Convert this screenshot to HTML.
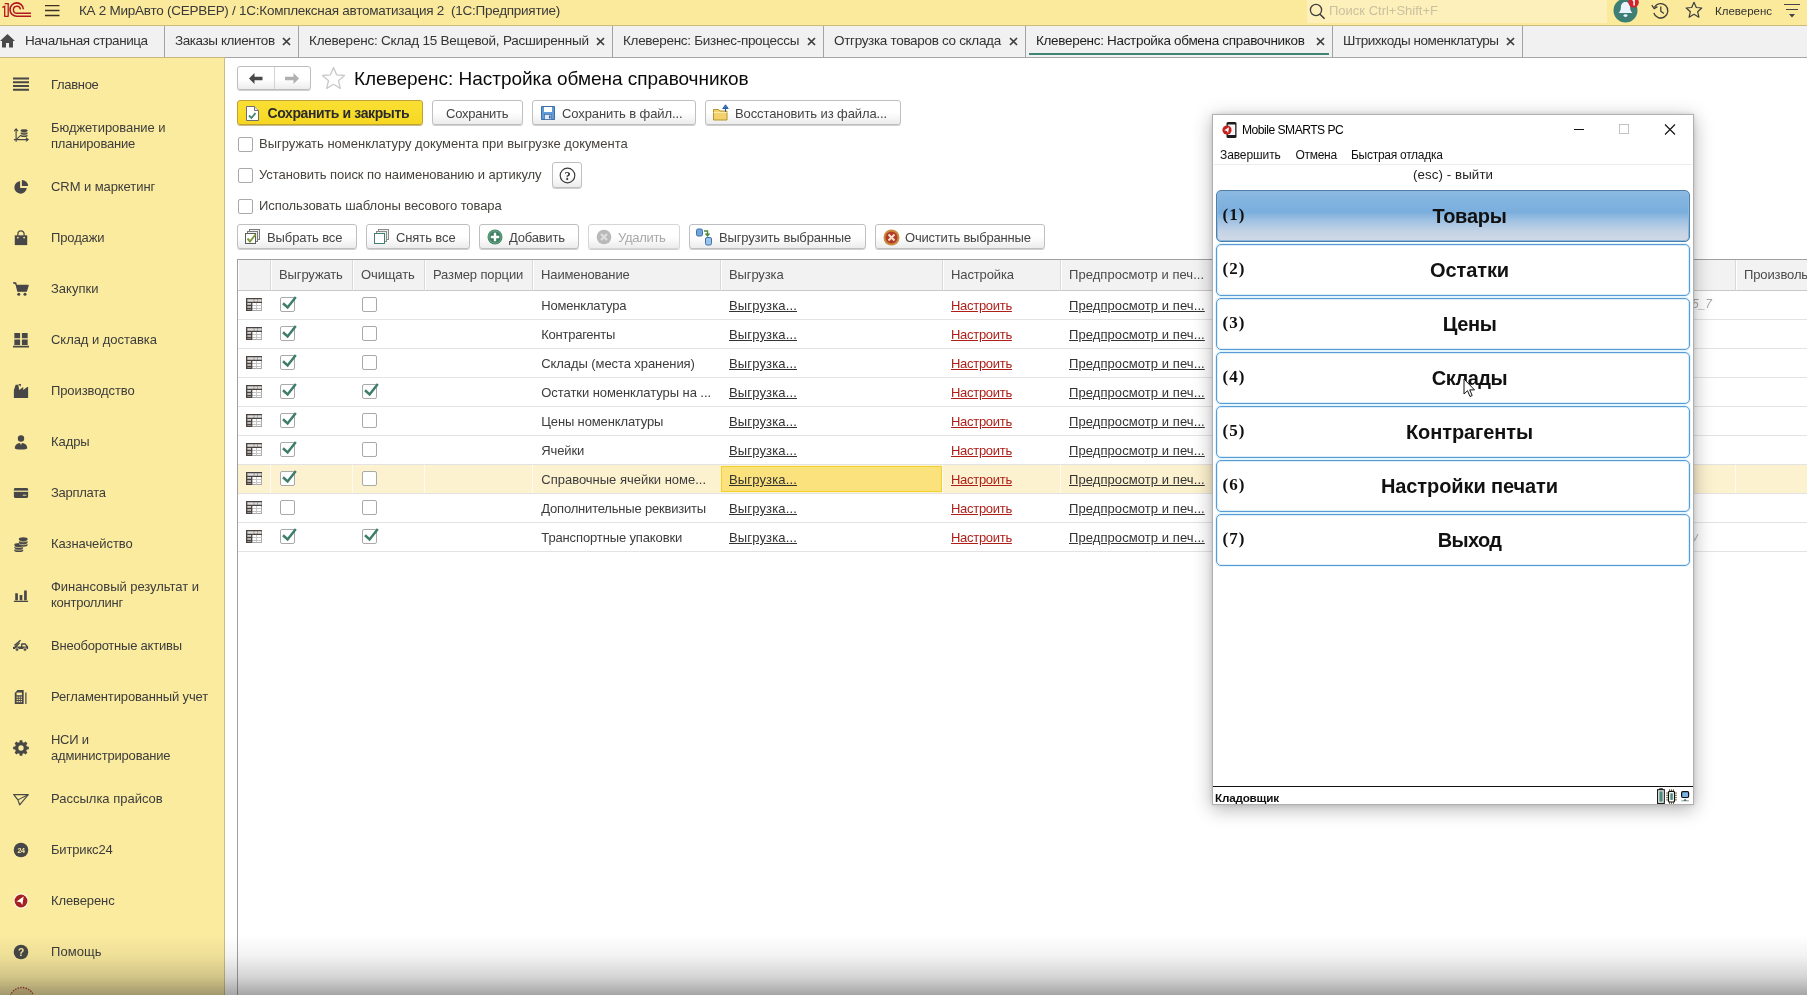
<!DOCTYPE html>
<html lang="ru">
<head>
<meta charset="utf-8">
<title>1C</title>
<style>
*{box-sizing:border-box;margin:0;padding:0}
html,body{width:1807px;height:995px;overflow:hidden;background:#fff}
body{font-family:"Liberation Sans",sans-serif;font-size:13px;color:#333;position:relative}
.abs{position:absolute}
/* title bar */
#titlebar{position:absolute;left:0;top:0;width:1807px;height:26px;background:#fbe99c;border-bottom:1px solid #cdbb7c}
#titlebar .ttl{position:absolute;left:79px;top:2.500px;font-size:13.500px;line-height:16px;letter-spacing:-0.262px;color:#3a3a3a;white-space:pre}
#search{position:absolute;left:1307px;top:0;width:300px;height:23px;background:#fdf0bb}
#search span{position:absolute;left:22px;top:3px;font-size:13px;line-height:15px;color:#c9c2a0}
/* tabs */
#tabs{position:absolute;left:0;top:26px;width:1807px;height:32px;background:#f1f1f1;border-bottom:1px solid #a6a6a6}
.tab{position:absolute;top:0;height:31px;border-right:1px solid #a3a3a3;font-size:13.500px;line-height:29px;color:#333;white-space:nowrap;letter-spacing:-.1px}
.tab .t{position:absolute;top:0;left:0}
.tab .x{position:absolute;top:11px;width:9px;height:9px}
/* sidebar */
#side{position:absolute;left:0;top:58px;width:225px;height:937px;background:#fbeb9f;border-right:1px solid #cdbd7e}
.si{position:absolute;left:0;width:224px;height:51px;margin-top:1px}
.si .ic{position:absolute;left:13px;top:17.500px;width:16px;height:16px}
.si .tx{position:absolute;left:51px;top:0;height:51px;display:flex;align-items:center;font-size:13px;line-height:16px;color:#3c3c3c;letter-spacing:-.15px}
/* content */
#content{position:absolute;left:226px;top:58px;width:1581px;height:937px;background:#fff}

.navbox{position:absolute;width:74px;height:24px;border:1px solid #bdbdbd;border-radius:3px;background:linear-gradient(#fff,#fff 55%,#ececec);box-shadow:0 1px 0 #cfcfcf}
.btn{position:absolute;height:25px;border:1px solid #bfbfbf;border-radius:3px;background:linear-gradient(#fff,#fff 50%,#ececec);box-shadow:0 1px 0 #d0d0d0}
.btn span{position:absolute;top:0;line-height:25px;font-size:13px;color:#444;white-space:nowrap;letter-spacing:-.1px}
.btn.def{background:linear-gradient(#f9df33,#f8dc2a 60%,#f6d622);border-color:#bfa232;box-shadow:0 1px 0 #c9bd84}
.btn.dis{border-color:#d6d6d6}
.cb{position:absolute;width:15px;height:15px;border:1px solid #a9a9a9;border-radius:2px;background:#fff}
.lbl{position:absolute;font-size:13px;line-height:15px;color:#46423e;white-space:nowrap;letter-spacing:-.12px}
#tbl{position:absolute;left:11px;top:201px;width:1570px;height:736px;border-left:1px solid #a0a0a0;border-top:1px solid #a0a0a0}
.th{position:absolute;top:0;height:31px;background:#f2f2f2;border-right:1px solid #d9d9d9;border-bottom:1px solid #c9c9c9;box-shadow:inset 1px 0 0 #fff}
.th span{position:absolute;left:8px;top:0;line-height:29px;font-size:13px;color:#4a4a4a;white-space:nowrap;letter-spacing:-.12px}
.tr{position:absolute;left:0;width:1569px;height:29px;border-bottom:1px solid #e3e3e3}
.tr.sel{background:#fdf2d0}
.td{position:absolute;top:0;line-height:29px;font-size:13px;color:#3c3c3c;white-space:nowrap;letter-spacing:-.12px}
.lk{text-decoration:underline;color:#333}
.lk.red{color:#ad1f18}
.ti{position:absolute;left:8px;top:7px;width:16px;height:13px}
.tk{position:absolute;left:-1px;top:-5px;width:18px;height:17px}
.selcell{position:absolute;left:483px;top:1px;width:221px;height:26px;background:#fbe27c;border:1px solid #f3d02a}

#ms{position:absolute;left:1212px;top:114px;width:482px;height:691px;background:#fff;border:1px solid #b0b0b0;box-shadow:0 4px 18px rgba(0,0,0,.30),0 0 5px rgba(0,0,0,.12)}
.mm{position:absolute;top:32px;font-size:12px;line-height:14px;color:#111;white-space:nowrap;letter-spacing:-.1px}
.mb{position:absolute;left:2px;width:474px;height:52px;border:1px solid #5b9bd5;border-radius:5px;background:#fff;box-shadow:inset 0 0 0 1px #dcedfa,0 0 0 1px #e4f5fc}
.mb.act{background:linear-gradient(#8cbae3 0,#84b5e0 15%,#7aaedd 42%,#9dc0e2 58%,#c2d2e5 80%,#d2dae6 100%);border-color:#4f7fa8;box-shadow:inset 0 0 0 1px #8bb9e2}
.mb i{position:absolute;left:5.500px;top:0;line-height:48px;font-family:"Liberation Serif",serif;font-style:normal;font-weight:bold;font-size:17px;color:#111;letter-spacing:1.1px}
.mb b{position:absolute;left:33px;right:0;top:0;line-height:50px;text-align:center;font-size:20px;font-weight:bold;color:#111;letter-spacing:-.1px}
#content,#side,#tabs,#titlebar,#ms{will-change:transform}
</style>
</head>
<body>
<!-- TITLE BAR -->
<div id="titlebar">
  <svg class="abs" style="left:0;top:0" width="34" height="20" viewBox="0 0 34 20"><g fill="none" stroke="#b3161e" stroke-width="1.300"><path d="M2.300 7.300L4.700 6.300V16.800M4.700 3.600H8.200M8.200 3V16.800M4.700 16.400h3.500"/><path d="M23.400 9.200A6.700 6.700 0 1 0 16.800 16.300H31" stroke-width="1.600"/><path d="M20.400 9.300A3.500 3.500 0 1 0 17 13.300H31" stroke-width="1.400"/></g></svg>
  <svg class="abs" style="left:45px;top:5px" width="15" height="12" viewBox="0 0 15 12"><path d="M0 .5H14.500M0 5.500H14.500M0 10.500H14.500" stroke="#3d3122" stroke-width="1.400"/></svg>
  <div class="ttl">КА 2 МирАвто (СЕРВЕР) / 1С:Комплексная автоматизация 2  (1С:Предприятие)</div>
  <div id="search">
    <svg class="abs" style="left:2px;top:3px" width="17" height="17" viewBox="0 0 17 17"><circle cx="7" cy="7" r="5.6" fill="none" stroke="#3d3d3d" stroke-width="1.3"/><path d="M11 11.2L15.6 15.8" stroke="#3d3d3d" stroke-width="1.6"/></svg>
    <span>Поиск Ctrl+Shift+F</span>
  </div>
  <!-- bell -->
  <svg class="abs" style="left:1613px;top:-2px" width="28" height="26" viewBox="0 0 28 26"><circle cx="12.5" cy="12.5" r="12" fill="#3d7f74"/><path d="M12.5 4c-3.2 0-4.6 2.6-4.6 5.4 0 3-1.4 4.6-2.4 5.6h14c-1-1-2.4-2.6-2.4-5.600 0-2.800-1.400-5.400-4.600-5.400z" fill="#e9f4ff"/><ellipse cx="12.5" cy="17.6" rx="2" ry="1.4" fill="#e9f4ff"/><circle cx="20.600" cy="4.200" r="5.200" fill="#d3222a"/><path d="M19.600 2.600l1.500-1v5.800" stroke="#fff" stroke-width="1.500" fill="none"/></svg>
  <!-- history -->
  <svg class="abs" style="left:1651px;top:2px" width="19" height="18" viewBox="0 0 19 18"><path d="M3.4 5.2A7.200 7.200 0 1 1 2.800 11" fill="none" stroke="#3d3d3d" stroke-width="1.300"/><path d="M.8 3.200l2.400 3.400 3.200-2" fill="none" stroke="#3d3d3d" stroke-width="1.300"/><path d="M9.800 4.500v4.700l3 2.300" fill="none" stroke="#3d3d3d" stroke-width="1.300"/></svg>
  <!-- star -->
  <svg class="abs" style="left:1685px;top:1px" width="18" height="18" viewBox="0 0 18 18"><path d="M9 1.300l2.300 5.200 5.500.5-4.200 3.700 1.300 5.500L9 13.300l-4.900 2.900 1.300-5.500L1.200 7l5.500-.5z" fill="none" stroke="#3d3d3d" stroke-width="1.200" stroke-linejoin="round"/></svg>
  <div class="abs" style="left:1715px;top:4px;font-size:11.500px;line-height:14px;color:#333">Клеверенс</div>
  <svg class="abs" style="left:1784px;top:4px" width="16" height="15" viewBox="0 0 16 15"><path d="M0 .5H16M2 5.500H14" stroke="#444" stroke-width="1"/><path d="M5 10h6l-3 3.500z" fill="#444"/></svg>
</div>

<!-- TABS -->
<div id="tabs">
  <div class="tab" style="left:0;width:165px"><svg class="abs" style="left:0;top:8px" width="15" height="14" viewBox="0 0 15 14"><path d="M7.500 0L0 7h2v6.500h4V9h3v4.500h4V7h2z" fill="#4a4a4a"/></svg><span class="t" style="left:25px;letter-spacing:-0.445px">Начальная страница</span></div>
  <div class="tab" style="left:165px;width:134px"><span class="t" style="left:10px;letter-spacing:-0.421px">Заказы клиентов</span><svg class="x" style="left:117px" viewBox="0 0 9 9"><path d="M1 1l7 7M8 1L1 8" stroke="#3d3d3d" stroke-width="1.700"/></svg></div>
  <div class="tab" style="left:299px;width:314px"><span class="t" style="left:10px;letter-spacing:-0.232px">Клеверенс: Склад 15 Вещевой, Расширенный</span><svg class="x" style="left:297px" viewBox="0 0 9 9"><path d="M1 1l7 7M8 1L1 8" stroke="#3d3d3d" stroke-width="1.700"/></svg></div>
  <div class="tab" style="left:613px;width:211px"><span class="t" style="left:10px;letter-spacing:-0.300px">Клеверенс: Бизнес-процессы</span><svg class="x" style="left:194px" viewBox="0 0 9 9"><path d="M1 1l7 7M8 1L1 8" stroke="#3d3d3d" stroke-width="1.700"/></svg></div>
  <div class="tab" style="left:824px;width:202px"><span class="t" style="left:10px;letter-spacing:-0.319px">Отгрузка товаров со склада</span><svg class="x" style="left:185px" viewBox="0 0 9 9"><path d="M1 1l7 7M8 1L1 8" stroke="#3d3d3d" stroke-width="1.700"/></svg></div>
  <div class="tab" style="left:1026px;width:307px;color:#1f1f1f"><span class="t" style="left:10px;letter-spacing:-0.315px">Клеверенс: Настройка обмена справочников</span><svg class="x" style="left:290px" viewBox="0 0 9 9"><path d="M1 1l7 7M8 1L1 8" stroke="#3d3d3d" stroke-width="1.700"/></svg><div class="abs" style="left:3px;top:27px;width:300px;height:2px;background:#3f8575"></div></div>
  <div class="tab" style="left:1333px;width:190px"><span class="t" style="left:10px;letter-spacing:-0.447px">Штрихкоды номенклатуры</span><svg class="x" style="left:173px" viewBox="0 0 9 9"><path d="M1 1l7 7M8 1L1 8" stroke="#3d3d3d" stroke-width="1.700"/></svg></div>
</div>

<div class="abs" style="left:0;top:57px;width:225px;height:1px;background:#c9b77d;z-index:2"></div>
<!-- SIDEBAR -->
<div id="side">
<div class="si" style="top:0"><svg class="ic" viewBox="0 0 18 18"><path d="M0 1.800h18M0 6h18M0 10.200h18M0 14.400h18" stroke="#474747" stroke-width="2.300"/></svg><div class="tx"><div><span style="letter-spacing:-0.307px">Главное</span></div></div></div>
<div class="si" style="top:51px"><svg class="ic" viewBox="0 0 18 18"><g stroke="#474747" fill="none" stroke-width="1.300"><path d="M3.500 1v14.500M1 13H17"/><path d="M1.500 3.500l2-2.500 2 2.500M14.500 11l2.500 2-2.500 2"/><path d="M3.500 13L9 8"/></g><g fill="#474747"><ellipse cx="12.500" cy="3" rx="4" ry="1.600"/><ellipse cx="12.500" cy="5.800" rx="4" ry="1.600"/><ellipse cx="12.500" cy="8.600" rx="4" ry="1.600"/></g><g stroke="#fbeb9f" stroke-width=".7" fill="none"><path d="M8.500 4.300c1 1.500 7 1.500 8 0M8.500 7.100c1 1.500 7 1.500 8 0"/></g></svg><div class="tx"><div><span style="letter-spacing:-0.050px">Бюджетирование и</span><br><span style="letter-spacing:-0.192px">планирование</span></div></div></div>
<div class="si" style="top:102px"><svg class="ic" viewBox="0 0 18 18"><path d="M8 2.500A7 7 0 1 0 15.500 10H8z" fill="#474747"/><path d="M10 1v7h7A7 7 0 0 0 10 1z" fill="#474747"/></svg><div class="tx"><div><span style="letter-spacing:-0.070px">CRM и маркетинг</span></div></div></div>
<div class="si" style="top:153px"><svg class="ic" viewBox="0 0 18 18"><path d="M2 6h14v11H2z" fill="#474747"/><path d="M5.500 8V4.500a3.500 3.500 0 0 1 7 0V8" fill="none" stroke="#474747" stroke-width="1.400"/><circle cx="5.500" cy="8.500" r="1" fill="#fbeb9f"/><circle cx="12.500" cy="8.500" r="1" fill="#fbeb9f"/></svg><div class="tx"><div><span style="letter-spacing:-0.121px">Продажи</span></div></div></div>
<div class="si" style="top:204px"><svg class="ic" viewBox="0 0 18 18"><path d="M0 2h3l2.500 9.500h9.500l2-6.500H4.500" fill="#474747" stroke="#474747" stroke-width="1.400" stroke-linejoin="round"/><circle cx="6.500" cy="15" r="1.700" fill="#474747"/><circle cx="13.500" cy="15" r="1.700" fill="#474747"/></svg><div class="tx"><div><span style="letter-spacing:0.007px">Закупки</span></div></div></div>
<div class="si" style="top:255px"><svg class="ic" viewBox="0 0 18 18"><path d="M1.500 1h6.500v6H1.500zM10 1h6.500v6H10zM1.500 8.500h6.500v6H1.500zM10 8.500h6.500v6H10zM0 15.500h18v2H0z" fill="#474747"/></svg><div class="tx"><div><span style="letter-spacing:-0.044px">Склад и доставка</span></div></div></div>
<div class="si" style="top:306px"><svg class="ic" viewBox="0 0 18 18"><path d="M1 17V8l2-6h3l1 6 4.500-3.500V8L16 4.500h1V17z" fill="#474747"/><path d="M6 1l3 .2-.5 3z" fill="#474747"/></svg><div class="tx"><div><span style="letter-spacing:-0.100px">Производство</span></div></div></div>
<div class="si" style="top:357px"><svg class="ic" viewBox="0 0 18 18"><circle cx="9" cy="5" r="3.600" fill="#474747"/><path d="M2 16c0-4 3-6 7-6s7 2 7 6c0 1-3 1.500-7 1.500S2 17 2 16z" fill="#474747"/><path d="M7.500 9.500h3l-1.500 3z" fill="#fbeb9f"/></svg><div class="tx"><div><span style="letter-spacing:-0.070px">Кадры</span></div></div></div>
<div class="si" style="top:408px"><svg class="ic" viewBox="0 0 18 18"><rect x="1" y="3.500" width="16" height="11" rx="1.500" fill="#474747"/><path d="M1 7h16" stroke="#fbeb9f" stroke-width="1.400"/><path d="M11 11.500h4" stroke="#fbeb9f" stroke-width="1"/></svg><div class="tx"><div><span style="letter-spacing:-0.263px">Зарплата</span></div></div></div>
<div class="si" style="top:459px"><svg class="ic" viewBox="0 0 18 18"><g fill="#474747"><ellipse cx="11.500" cy="3.500" rx="5" ry="2.200"/><ellipse cx="11.500" cy="6.700" rx="5" ry="2.200"/><ellipse cx="11.500" cy="9.900" rx="5" ry="2.200"/><ellipse cx="6.500" cy="10" rx="5" ry="2.200"/><ellipse cx="6.500" cy="13" rx="5" ry="2.200"/><ellipse cx="6.500" cy="16" rx="5" ry="2.200"/></g><g stroke="#fbeb9f" stroke-width=".8" fill="none"><path d="M6.500 5.200c1 1.800 9 1.800 10 0M6.500 8.400c1 1.800 9 1.800 10 0M1.500 11.600c1 1.800 9 1.800 10 0M1.500 14.600c1 1.800 9 1.800 10 0"/></g></svg><div class="tx"><div><span style="letter-spacing:-0.067px">Казначейство</span></div></div></div>
<div class="si" style="top:510px"><svg class="ic" viewBox="0 0 18 18"><path d="M2.500 7h3v8h-3zM7.500 9h3v6h-3zM12.500 4h3v11h-3zM1 15.500h16v1.500H1z" fill="#474747"/></svg><div class="tx"><div><span style="letter-spacing:-0.045px">Финансовый результат и</span><br><span style="letter-spacing:-0.250px">контроллинг</span></div></div></div>
<div class="si" style="top:561px"><svg class="ic" viewBox="0 0 18 18"><path d="M0 12.500V10l2-.5L7 5l1 1-3.500 3.500H9V7.500c0-1 .5-1.500 1.500-1.500H14l3 3.500v3z" fill="#474747"/><path d="M1 8l7-6 1 1-6.500 6z" fill="#474747"/><path d="M10.500 7.500h3l1.500 2h-4.500z" fill="#fbeb9f"/><circle cx="4.500" cy="13" r="1.900" fill="#474747" stroke="#fbeb9f" stroke-width=".8"/><circle cx="13.500" cy="13" r="1.900" fill="#474747" stroke="#fbeb9f" stroke-width=".8"/></svg><div class="tx"><div><span style="letter-spacing:-0.224px">Внеоборотные активы</span></div></div></div>
<div class="si" style="top:612px"><svg class="ic" viewBox="0 0 18 18"><path d="M2 4.500L5 1h7v16H2z" fill="#474747"/><path d="M14.500 4v13" stroke="#474747" stroke-width="1.400"/><rect x="4" y="4" width="6" height="3" fill="#fbeb9f"/><g fill="#fbeb9f"><rect x="4" y="8.500" width="1.400" height="1.400"/><rect x="6.300" y="8.500" width="1.400" height="1.400"/><rect x="8.600" y="8.500" width="1.400" height="1.400"/><rect x="4" y="11" width="1.400" height="1.400"/><rect x="6.300" y="11" width="1.400" height="1.400"/><rect x="8.600" y="11" width="1.400" height="1.400"/><rect x="4" y="13.500" width="1.400" height="1.400"/><rect x="6.300" y="13.500" width="1.400" height="1.400"/><rect x="8.600" y="13.500" width="1.400" height="1.400"/></g></svg><div class="tx"><div><span style="letter-spacing:-0.137px">Регламентированный учет</span></div></div></div>
<div class="si" style="top:663px"><svg class="ic" viewBox="0 0 18 18"><path d="M7.600 0h2.800l.4 2.300 1.500.6 1.900-1.300 2 2-1.300 1.900.6 1.500 2.300.4v2.800l-2.300.4-.6 1.500 1.300 1.900-2 2-1.900-1.300-1.500.6-.4 2.300H7.600l-.4-2.300-1.500-.6-1.900 1.300-2-2 1.300-1.900-.6-1.500L.2 10.200V7.400l2.300-.4.6-1.500-1.300-1.900 2-2 1.900 1.300 1.500-.6z" fill="#474747" transform="translate(0,.2)"/><circle cx="9" cy="9" r="3" fill="#fbeb9f"/></svg><div class="tx"><div><span style="letter-spacing:-0.270px">НСИ и</span><br><span style="letter-spacing:-0.185px">администрирование</span></div></div></div>
<div class="si" style="top:714px"><svg class="ic" viewBox="0 0 18 18"><path d="M.8 4h16.400L7.500 15.500 5.500 10z" fill="none" stroke="#474747" stroke-width="1.300" stroke-linejoin="round"/><path d="M5.500 10L17 4.200" stroke="#474747" stroke-width="1.200"/></svg><div class="tx"><div><span style="letter-spacing:0.000px">Рассылка прайсов</span></div></div></div>
<div class="si" style="top:765px"><svg class="ic" viewBox="0 0 18 18"><circle cx="9" cy="9" r="8.200" fill="#474747"/><text x="9" y="12" font-family="Liberation Sans" font-weight="bold" font-size="8" text-anchor="middle" fill="#fbeb9f" letter-spacing="-.5">24</text></svg><div class="tx"><div><span style="letter-spacing:-0.161px">Битрикс24</span></div></div></div>
<div class="si" style="top:816px"><svg class="ic" viewBox="0 0 18 18"><circle cx="9" cy="9" r="8.600" fill="#fdf6e3"/><circle cx="9" cy="9" r="7.200" fill="#a5231f"/><path d="M4 9.500l8-5.500-1.500 9.500-2-3z" fill="#fff"/></svg><div class="tx"><div><span style="letter-spacing:-0.106px">Клеверенс</span></div></div></div>
<div class="si" style="top:867px"><svg class="ic" viewBox="0 0 18 18"><circle cx="9" cy="9" r="8.200" fill="#474747"/><text x="9" y="13.200" font-family="Liberation Sans" font-weight="bold" font-size="11.500" text-anchor="middle" fill="#fbeb9f">?</text></svg><div class="tx"><div><span style="letter-spacing:0.067px">Помощь</span></div></div></div>

</div>

<!-- CONTENT -->
<div id="content">
<!-- coordinates inside #content are page coords minus (226,58) -->
<div class="navbox" style="left:11px;top:8px"><svg class="abs" style="left:11px;top:6px" width="14" height="11" viewBox="0 0 14 11"><path d="M0 5.500L5.500 0v3.800H13.500v3.400H5.500V11z" fill="#484848"/></svg><div class="abs" style="left:36px;top:0;width:1px;height:22px;background:#d4d4d4"></div><svg class="abs" style="left:47px;top:6px" width="14" height="11" viewBox="0 0 14 11"><path d="M14 5.500L8.500 0v3.800H0v3.400h8.500V11z" fill="#b0b0b0"/></svg></div>
<svg class="abs" style="left:95px;top:8px" width="25" height="24" viewBox="0 0 25 24"><path d="M12.500 1.500l3.100 7.300 7.900.7-6 5.200 1.800 7.700-6.800-4.100-6.800 4.100 1.800-7.700-6-5.200 7.900-.7z" fill="#fff" stroke="#c9c9c9" stroke-width="1.300" stroke-linejoin="round"/></svg>
<div class="abs" style="left:128px;top:9px;font-size:19px;line-height:24px;color:#0a0a0a;white-space:nowrap;letter-spacing:-.03px">Клеверенс: Настройка обмена справочников</div>

<div class="btn def" style="left:11px;top:42px;width:186px"><svg class="abs" style="left:8px;top:5px" width="13" height="15" viewBox="0 0 13 15"><path d="M.500 .500h8l4 4v10h-12z" fill="#fff" stroke="#6e6e6e"/><path d="M8.500 .500v4h4" fill="#e8e8e8" stroke="#6e6e6e"/><path d="M3 9.500l2.500 2.500 4-5" fill="none" stroke="#3f8575" stroke-width="1.800"/></svg><span style="left:29.500px;font-weight:bold;font-size:14px;color:#2b2b2b;letter-spacing:-0.383px">Сохранить и закрыть</span></div>
<div class="btn" style="left:206px;top:42px;width:91px"><span style="left:13px;letter-spacing:-.25px">Сохранить</span></div>
<div class="btn" style="left:306px;top:42px;width:164px"><svg class="abs" style="left:8px;top:5px" width="14" height="14" viewBox="0 0 14 14"><path d="M.500 .500h13v13h-13z" fill="#5f9bd6" stroke="#3a6ea5"/><rect x="3" y="1" width="8" height="5" fill="#fff"/><rect x="3.500" y="8.500" width="7" height="5" fill="#dfe8f4" stroke="#2f5f9a" stroke-width=".6"/><rect x="8" y="9.500" width="1.600" height="3" fill="#2f5f9a"/></svg><span style="left:29px">Сохранить в файл...</span></div>
<div class="btn" style="left:479px;top:42px;width:196px"><svg class="abs" style="left:7px;top:3px" width="17" height="17" viewBox="0 0 17 17"><path d="M.500 5.500h5l1.500 1.500h7v9h-13.500z" fill="#f3d16c" stroke="#b8922c"/><path d="M.500 8.500h13.500" stroke="#fbe9a8"/><path d="M12.500 8V3M9.800 4.500L12.500 .8l2.700 3.700z" fill="#3f7fc4" stroke="#2a62a3" stroke-width="1"/></svg><span style="left:29px">Восстановить из файла...</span></div>

<div class="cb" style="left:12px;top:79px"></div><div class="lbl" style="left:33px;top:78px;letter-spacing:-.005px">Выгружать номенклатуру документа при выгрузке документа</div>
<div class="cb" style="left:12px;top:110px"></div><div class="lbl" style="left:33px;top:109px;letter-spacing:-.07px">Установить поиск по наименованию и артикулу</div>
<div class="btn" style="left:326px;top:104px;width:30px;height:26px"><svg class="abs" style="left:6px;top:4px" width="17" height="17" viewBox="0 0 17 17"><circle cx="8.500" cy="8.500" r="7.300" fill="none" stroke="#3c3c3c" stroke-width="1.200"/><text x="8.500" y="12.600" font-family="Liberation Serif" font-weight="bold" font-size="12.500" text-anchor="middle" fill="#333">?</text></svg></div>
<div class="cb" style="left:12px;top:141px"></div><div class="lbl" style="left:33px;top:140px;letter-spacing:-.08px">Использовать шаблоны весового товара</div>

<div class="btn" style="left:11px;top:166px;width:120px"><svg class="abs" style="left:7px;top:4px" width="16" height="16" viewBox="0 0 16 16"><rect x="4.500" y=".500" width="10" height="10" fill="#eee" stroke="#7a7a7a"/><rect x="2.500" y="2.500" width="10" height="10" fill="#eee" stroke="#7a7a7a"/><rect x=".500" y="4.500" width="10" height="10" fill="#fff" stroke="#5c5c5c"/><path d="M2.500 9.500l2.500 3 5.500-7" fill="none" stroke="#7d9a3c" stroke-width="2"/></svg><span style="left:29px">Выбрать все</span></div>
<div class="btn" style="left:140px;top:166px;width:104px"><svg class="abs" style="left:7px;top:4px" width="16" height="16" viewBox="0 0 16 16"><rect x="4.500" y=".500" width="10" height="10" fill="#eee" stroke="#8a8a8a"/><rect x="2.500" y="2.500" width="10" height="10" fill="#eee" stroke="#8a8a8a"/><rect x=".500" y="4.500" width="10" height="10" fill="#fff" stroke="#3f7f74"/></svg><span style="left:29px">Снять все</span></div>
<div class="btn" style="left:253px;top:166px;width:100px"><svg class="abs" style="left:7px;top:4px" width="16" height="16" viewBox="0 0 16 16"><circle cx="8" cy="8" r="7.500" fill="#3c7d63"/><circle cx="8" cy="8" r="6.200" fill="none" stroke="#7fc08f" stroke-width=".8"/><path d="M8 3.800v8.400M3.800 8h8.400" stroke="#fff" stroke-width="2.400"/></svg><span style="left:29px;letter-spacing:-.22px">Добавить</span></div>
<div class="btn dis" style="left:362px;top:166px;width:92px"><svg class="abs" style="left:7px;top:4px" width="16" height="16" viewBox="0 0 16 16"><circle cx="8" cy="8" r="7.300" fill="#b9b9b9"/><path d="M5 5l6 6M11 5l-6 6" stroke="#dedede" stroke-width="2.200"/></svg><span style="left:29px;color:#a8a8a8;letter-spacing:-.3px">Удалить</span></div>
<div class="btn" style="left:463px;top:166px;width:177px"><svg class="abs" style="left:6px;top:3px" width="17" height="18" viewBox="0 0 17 18"><rect x=".500" y="1" width="6" height="7" rx="1.500" fill="#6fa4dc" stroke="#3f72ad"/><rect x="9.500" y="9.500" width="6" height="7.500" rx="1.500" fill="#9cc3ea" stroke="#3f72ad"/><path d="M8 3h3.500v4M9.500 5.500l2 2.500 2-2.500" fill="none" stroke="#4d8a3c" stroke-width="1.400"/></svg><span style="left:29px;letter-spacing:-.15px">Выгрузить выбранные</span></div>
<div class="btn" style="left:649px;top:166px;width:170px"><svg class="abs" style="left:7px;top:4px" width="17" height="17" viewBox="0 0 17 17"><circle cx="8.500" cy="8.500" r="8" fill="#c98a3a"/><circle cx="8.500" cy="8.500" r="6" fill="#b23a2a"/><path d="M5.500 5.500l6 6M11.500 5.500l-6 6" stroke="#f5e2c8" stroke-width="2"/></svg><span style="left:29px;letter-spacing:-.2px">Очистить выбранные</span></div>

<!-- TABLE -->
<div id="tbl">
<div class="th" style="left:0;width:33px"></div>
<div class="th" style="left:33px;width:82px"><span>Выгружать</span></div>
<div class="th" style="left:115px;width:72px"><span>Очищать</span></div>
<div class="th" style="left:187px;width:108px"><span>Размер порции</span></div>
<div class="th" style="left:295px;width:188px"><span>Наименование</span></div>
<div class="th" style="left:483px;width:222px"><span>Выгрузка</span></div>
<div class="th" style="left:705px;width:118px"><span>Настройка</span></div>
<div class="th" style="left:823px;width:675px"><span style="letter-spacing:.05px">Предпросмотр и печ...</span></div>
<div class="th" style="left:1498px;width:80px;border-right:0"><span>Произволь</span></div>
<div class="tr" style="top:31px"><svg class="ti" viewBox="0 0 16 13"><rect x=".500" y=".500" width="15" height="12" fill="#fff" stroke="#a9a9a9"/><rect x="1" y="1" width="14" height="3" fill="#dcdcdc"/><rect x="1" y="4" width="4.500" height="8.500" fill="#d8d8d8"/><path d="M6 7.500h9.500M6 10.500h9.500M10.500 4.500v8" stroke="#c4c4c4"/><path d="M8 1v3M11.500 1v3" stroke="#a8a8a8"/><path d="M0 .600H16M.700 0V13M0 4.300H16M5.700 4.300V12.500M0 7.500H5.700M0 10.500H5.700M0 12.400H6" stroke="#4a4340" stroke-width="1.300" fill="none"/></svg><div class="cb" style="left:42px;top:6px"><svg class="tk" viewBox="0 0 18 17"><path d="M3 10.300L7.600 14.400L15.800 4" fill="none" stroke="#3e7d6c" stroke-width="2.500"/></svg></div><div class="cb" style="left:124px;top:6px"></div><div class="td" style="left:303.300px;letter-spacing:-0.187px">Номенклатура</div><div class="td lk" style="left:491px;letter-spacing:.15px">Выгрузка...</div><div class="td lk red" style="left:713px;letter-spacing:-.29px">Настроить</div><div class="td lk" style="left:831px;letter-spacing:.08px">Предпросмотр и печ...</div></div>
<div class="tr" style="top:60px"><svg class="ti" viewBox="0 0 16 13"><rect x=".500" y=".500" width="15" height="12" fill="#fff" stroke="#a9a9a9"/><rect x="1" y="1" width="14" height="3" fill="#dcdcdc"/><rect x="1" y="4" width="4.500" height="8.500" fill="#d8d8d8"/><path d="M6 7.500h9.500M6 10.500h9.500M10.500 4.500v8" stroke="#c4c4c4"/><path d="M8 1v3M11.500 1v3" stroke="#a8a8a8"/><path d="M0 .600H16M.700 0V13M0 4.300H16M5.700 4.300V12.500M0 7.500H5.700M0 10.500H5.700M0 12.400H6" stroke="#4a4340" stroke-width="1.300" fill="none"/></svg><div class="cb" style="left:42px;top:6px"><svg class="tk" viewBox="0 0 18 17"><path d="M3 10.300L7.600 14.400L15.800 4" fill="none" stroke="#3e7d6c" stroke-width="2.500"/></svg></div><div class="cb" style="left:124px;top:6px"></div><div class="td" style="left:303.300px;letter-spacing:-0.261px">Контрагенты</div><div class="td lk" style="left:491px;letter-spacing:.15px">Выгрузка...</div><div class="td lk red" style="left:713px;letter-spacing:-.29px">Настроить</div><div class="td lk" style="left:831px;letter-spacing:.08px">Предпросмотр и печ...</div></div>
<div class="tr" style="top:89px"><svg class="ti" viewBox="0 0 16 13"><rect x=".500" y=".500" width="15" height="12" fill="#fff" stroke="#a9a9a9"/><rect x="1" y="1" width="14" height="3" fill="#dcdcdc"/><rect x="1" y="4" width="4.500" height="8.500" fill="#d8d8d8"/><path d="M6 7.500h9.500M6 10.500h9.500M10.500 4.500v8" stroke="#c4c4c4"/><path d="M8 1v3M11.500 1v3" stroke="#a8a8a8"/><path d="M0 .600H16M.700 0V13M0 4.300H16M5.700 4.300V12.500M0 7.500H5.700M0 10.500H5.700M0 12.400H6" stroke="#4a4340" stroke-width="1.300" fill="none"/></svg><div class="cb" style="left:42px;top:6px"><svg class="tk" viewBox="0 0 18 17"><path d="M3 10.300L7.600 14.400L15.800 4" fill="none" stroke="#3e7d6c" stroke-width="2.500"/></svg></div><div class="cb" style="left:124px;top:6px"></div><div class="td" style="left:303.300px;letter-spacing:-0.083px">Склады (места хранения)</div><div class="td lk" style="left:491px;letter-spacing:.15px">Выгрузка...</div><div class="td lk red" style="left:713px;letter-spacing:-.29px">Настроить</div><div class="td lk" style="left:831px;letter-spacing:.08px">Предпросмотр и печ...</div></div>
<div class="tr" style="top:118px"><svg class="ti" viewBox="0 0 16 13"><rect x=".500" y=".500" width="15" height="12" fill="#fff" stroke="#a9a9a9"/><rect x="1" y="1" width="14" height="3" fill="#dcdcdc"/><rect x="1" y="4" width="4.500" height="8.500" fill="#d8d8d8"/><path d="M6 7.500h9.500M6 10.500h9.500M10.500 4.500v8" stroke="#c4c4c4"/><path d="M8 1v3M11.500 1v3" stroke="#a8a8a8"/><path d="M0 .600H16M.700 0V13M0 4.300H16M5.700 4.300V12.500M0 7.500H5.700M0 10.500H5.700M0 12.400H6" stroke="#4a4340" stroke-width="1.300" fill="none"/></svg><div class="cb" style="left:42px;top:6px"><svg class="tk" viewBox="0 0 18 17"><path d="M3 10.300L7.600 14.400L15.800 4" fill="none" stroke="#3e7d6c" stroke-width="2.500"/></svg></div><div class="cb" style="left:124px;top:6px"><svg class="tk" viewBox="0 0 18 17"><path d="M3 10.300L7.600 14.400L15.800 4" fill="none" stroke="#3e7d6c" stroke-width="2.500"/></svg></div><div class="td" style="left:303.300px;letter-spacing:-0.067px">Остатки номенклатуры на ...</div><div class="td lk" style="left:491px;letter-spacing:.15px">Выгрузка...</div><div class="td lk red" style="left:713px;letter-spacing:-.29px">Настроить</div><div class="td lk" style="left:831px;letter-spacing:.08px">Предпросмотр и печ...</div></div>
<div class="tr" style="top:147px"><svg class="ti" viewBox="0 0 16 13"><rect x=".500" y=".500" width="15" height="12" fill="#fff" stroke="#a9a9a9"/><rect x="1" y="1" width="14" height="3" fill="#dcdcdc"/><rect x="1" y="4" width="4.500" height="8.500" fill="#d8d8d8"/><path d="M6 7.500h9.500M6 10.500h9.500M10.500 4.500v8" stroke="#c4c4c4"/><path d="M8 1v3M11.500 1v3" stroke="#a8a8a8"/><path d="M0 .600H16M.700 0V13M0 4.300H16M5.700 4.300V12.500M0 7.500H5.700M0 10.500H5.700M0 12.400H6" stroke="#4a4340" stroke-width="1.300" fill="none"/></svg><div class="cb" style="left:42px;top:6px"><svg class="tk" viewBox="0 0 18 17"><path d="M3 10.300L7.600 14.400L15.800 4" fill="none" stroke="#3e7d6c" stroke-width="2.500"/></svg></div><div class="cb" style="left:124px;top:6px"></div><div class="td" style="left:303.300px;letter-spacing:-0.131px">Цены номенклатуры</div><div class="td lk" style="left:491px;letter-spacing:.15px">Выгрузка...</div><div class="td lk red" style="left:713px;letter-spacing:-.29px">Настроить</div><div class="td lk" style="left:831px;letter-spacing:.08px">Предпросмотр и печ...</div></div>
<div class="tr" style="top:176px"><svg class="ti" viewBox="0 0 16 13"><rect x=".500" y=".500" width="15" height="12" fill="#fff" stroke="#a9a9a9"/><rect x="1" y="1" width="14" height="3" fill="#dcdcdc"/><rect x="1" y="4" width="4.500" height="8.500" fill="#d8d8d8"/><path d="M6 7.500h9.500M6 10.500h9.500M10.500 4.500v8" stroke="#c4c4c4"/><path d="M8 1v3M11.500 1v3" stroke="#a8a8a8"/><path d="M0 .600H16M.700 0V13M0 4.300H16M5.700 4.300V12.500M0 7.500H5.700M0 10.500H5.700M0 12.400H6" stroke="#4a4340" stroke-width="1.300" fill="none"/></svg><div class="cb" style="left:42px;top:6px"><svg class="tk" viewBox="0 0 18 17"><path d="M3 10.300L7.600 14.400L15.800 4" fill="none" stroke="#3e7d6c" stroke-width="2.500"/></svg></div><div class="cb" style="left:124px;top:6px"></div><div class="td" style="left:303.300px;letter-spacing:-0.135px">Ячейки</div><div class="td lk" style="left:491px;letter-spacing:.15px">Выгрузка...</div><div class="td lk red" style="left:713px;letter-spacing:-.29px">Настроить</div><div class="td lk" style="left:831px;letter-spacing:.08px">Предпросмотр и печ...</div></div>
<div class="tr sel" style="top:205px"><svg class="ti" viewBox="0 0 16 13"><rect x=".500" y=".500" width="15" height="12" fill="#fff" stroke="#a9a9a9"/><rect x="1" y="1" width="14" height="3" fill="#dcdcdc"/><rect x="1" y="4" width="4.500" height="8.500" fill="#d8d8d8"/><path d="M6 7.500h9.500M6 10.500h9.500M10.500 4.500v8" stroke="#c4c4c4"/><path d="M8 1v3M11.500 1v3" stroke="#a8a8a8"/><path d="M0 .600H16M.700 0V13M0 4.300H16M5.700 4.300V12.500M0 7.500H5.700M0 10.500H5.700M0 12.400H6" stroke="#4a4340" stroke-width="1.300" fill="none"/></svg><div class="cb" style="left:42px;top:6px"><svg class="tk" viewBox="0 0 18 17"><path d="M3 10.300L7.600 14.400L15.800 4" fill="none" stroke="#3e7d6c" stroke-width="2.500"/></svg></div><div class="cb" style="left:124px;top:6px"></div><div class="td" style="left:303.300px;letter-spacing:-0.013px">Справочные ячейки номе...</div><div class="abs" style="left:32px;top:0;width:1px;height:28px;background:#fffaf0"></div><div class="abs" style="left:114px;top:0;width:1px;height:28px;background:#fffaf0"></div><div class="abs" style="left:186px;top:0;width:1px;height:28px;background:#fffaf0"></div><div class="abs" style="left:294px;top:0;width:1px;height:28px;background:#fffaf0"></div><div class="abs" style="left:704px;top:0;width:1px;height:28px;background:#fffaf0"></div><div class="abs" style="left:822px;top:0;width:1px;height:28px;background:#fffaf0"></div><div class="abs" style="left:1497px;top:0;width:1px;height:28px;background:#fffaf0"></div><div class="selcell"></div><div class="td lk" style="left:491px;letter-spacing:.15px">Выгрузка...</div><div class="td lk red" style="left:713px;letter-spacing:-.29px">Настроить</div><div class="td lk" style="left:831px;letter-spacing:.08px">Предпросмотр и печ...</div></div>
<div class="tr" style="top:234px"><svg class="ti" viewBox="0 0 16 13"><rect x=".500" y=".500" width="15" height="12" fill="#fff" stroke="#a9a9a9"/><rect x="1" y="1" width="14" height="3" fill="#dcdcdc"/><rect x="1" y="4" width="4.500" height="8.500" fill="#d8d8d8"/><path d="M6 7.500h9.500M6 10.500h9.500M10.500 4.500v8" stroke="#c4c4c4"/><path d="M8 1v3M11.500 1v3" stroke="#a8a8a8"/><path d="M0 .600H16M.700 0V13M0 4.300H16M5.700 4.300V12.500M0 7.500H5.700M0 10.500H5.700M0 12.400H6" stroke="#4a4340" stroke-width="1.300" fill="none"/></svg><div class="cb" style="left:42px;top:6px"></div><div class="cb" style="left:124px;top:6px"></div><div class="td" style="left:303.300px;letter-spacing:-0.194px">Дополнительные реквизиты</div><div class="td lk" style="left:491px;letter-spacing:.15px">Выгрузка...</div><div class="td lk red" style="left:713px;letter-spacing:-.29px">Настроить</div><div class="td lk" style="left:831px;letter-spacing:.08px">Предпросмотр и печ...</div></div>
<div class="tr" style="top:263px"><svg class="ti" viewBox="0 0 16 13"><rect x=".500" y=".500" width="15" height="12" fill="#fff" stroke="#a9a9a9"/><rect x="1" y="1" width="14" height="3" fill="#dcdcdc"/><rect x="1" y="4" width="4.500" height="8.500" fill="#d8d8d8"/><path d="M6 7.500h9.500M6 10.500h9.500M10.500 4.500v8" stroke="#c4c4c4"/><path d="M8 1v3M11.500 1v3" stroke="#a8a8a8"/><path d="M0 .600H16M.700 0V13M0 4.300H16M5.700 4.300V12.500M0 7.500H5.700M0 10.500H5.700M0 12.400H6" stroke="#4a4340" stroke-width="1.300" fill="none"/></svg><div class="cb" style="left:42px;top:6px"><svg class="tk" viewBox="0 0 18 17"><path d="M3 10.300L7.600 14.400L15.800 4" fill="none" stroke="#3e7d6c" stroke-width="2.500"/></svg></div><div class="cb" style="left:124px;top:6px"><svg class="tk" viewBox="0 0 18 17"><path d="M3 10.300L7.600 14.400L15.800 4" fill="none" stroke="#3e7d6c" stroke-width="2.500"/></svg></div><div class="td" style="left:303.300px;letter-spacing:-0.132px">Транспортные упаковки</div><div class="td lk" style="left:491px;letter-spacing:.15px">Выгрузка...</div><div class="td lk red" style="left:713px;letter-spacing:-.29px">Настроить</div><div class="td lk" style="left:831px;letter-spacing:.08px">Предпросмотр и печ...</div></div>
</div>

</div>

<div class="abs" style="left:1692px;top:297px;font-size:12px;font-style:italic;color:#a6a6a6;line-height:14px">5_7</div>
<div class="abs" style="left:1692px;top:530px;font-size:12px;font-style:italic;color:#b5b5b5;line-height:14px">v</div>
<div id="ms"><div class="abs" style="left:1px;top:1px;width:479px;height:688px">
  <!-- title -->
  <svg class="abs" style="left:8px;top:5px" width="16" height="18" viewBox="0 0 16 18"><rect x="4.500" y="1" width="10" height="16" rx="1.500" fill="#1c1c1c"/><rect x="5.800" y="3.500" width="7.400" height="10.500" fill="#f4f6fa"/><circle cx="5" cy="9" r="4.600" fill="#c4201c"/><path d="M2.200 9.300l4.800-3-.9 5.600-1.200-1.900z" fill="#fff"/></svg>
  <div class="abs" style="left:28px;top:7px;font-size:12.100px;line-height:14px;color:#000;white-space:nowrap;letter-spacing:-.5px">Mobile SMARTS PC</div>
  <svg class="abs" style="left:360px;top:8px" width="110" height="12" viewBox="0 0 110 12"><path d="M0 5.500h10" stroke="#111" stroke-width="1"/><rect x="45.500" y=".500" width="9" height="9" fill="none" stroke="#c3c3c3"/><path d="M91 .500l10 10M101 .500l-10 10" stroke="#111" stroke-width="1.100"/></svg>
  <!-- menu -->
  <div class="mm" style="left:6px">Завершить</div><div class="mm" style="left:81.500px;letter-spacing:-.3px">Отмена</div><div class="mm" style="left:137px;letter-spacing:-.27px">Быстрая отладка</div>
  <div class="abs" style="left:0;top:48px;width:478px;height:1px;background:#ececec"></div>
  <div class="abs" style="left:0;top:52px;width:478px;text-align:center;font-size:13.300px;line-height:14px;color:#222;letter-spacing:.1px">(esc) - выйти</div>
  <!-- buttons -->
  <div class="mb act" style="top:74px"><i>(1)</i><b style="letter-spacing:-0.25px">Товары</b></div>
  <div class="mb" style="top:128px"><i>(2)</i><b>Остатки</b></div>
  <div class="mb" style="top:182px"><i>(3)</i><b style="letter-spacing:-0.35px">Цены</b></div>
  <div class="mb" style="top:236px"><i>(4)</i><b style="letter-spacing:-0.5px">Склады</b></div>
  <div class="mb" style="top:290px"><i>(5)</i><b>Контрагенты</b></div>
  <div class="mb" style="top:344px"><i>(6)</i><b>Настройки печати</b></div>
  <div class="mb" style="top:398px"><i>(7)</i><b style="letter-spacing:-0.7px">Выход</b></div>
  <!-- status -->
  <div class="abs" style="left:-1px;top:670px;width:480px;height:1px;background:#111"></div>
  <div class="abs" style="left:1px;top:675px;font-size:11.700px;font-weight:bold;line-height:13px;color:#111;letter-spacing:-.2px">Кладовщик</div>
  <svg class="abs" style="left:443px;top:672px" width="35" height="17" viewBox="0 0 35 17"><rect x=".600" y="1.700" width="6.700" height="13.700" fill="#fff" stroke="#111" stroke-width="1.100"/><rect x="2.200" y=".300" width="3.600" height="1.500" fill="#111"/><rect x="2.300" y="3.300" width="3.400" height="10.400" fill="#4f8b78"/><path d="M12.500 1.200v2M14.500 1.200v2M16.500 1.200v2M12.500 14v2M14.500 14v2M16.500 14v2M9 5h2.200M9 7.300h2.200M9 9.600h2.200M9 11.900h2.200M17.800 5H20M17.800 7.300H20M17.800 9.600H20M17.800 11.900H20" stroke="#5e4e1c" stroke-width=".800"/><rect x="11.500" y="3.400" width="6" height="10.600" rx="1" fill="#fff" stroke="#111" stroke-width="1.200"/><rect x="13.300" y="5.300" width="2.500" height="6.600" fill="#4f8b78"/><rect x="24.600" y="3.600" width="7" height="5.900" rx="1.200" fill="#7fb2e5" stroke="#111" stroke-width="1.200"/><path d="M24.300 12.800h7.600" stroke="#a0a0a0" stroke-width="1.100"/><path d="M28.100 10.600l-1.700 2.400h3.400z" fill="#3c7d63"/></svg>
</div></div>
<!-- cursor -->
<svg class="abs" style="left:1463px;top:378px" width="13" height="20" viewBox="0 0 13 20"><path d="M1 1v15l3.500-3.300 2.500 5.800 2.200-1-2.500-5.600H11.500z" fill="#fff" stroke="#111" stroke-width="1"/></svg>

<svg class="abs" style="left:6px;top:984px" width="32" height="11" viewBox="0 0 32 11"><circle cx="16" cy="16" r="12.500" fill="#e9d08a" stroke="#a8382f" stroke-width="1.400" stroke-dasharray="1.500 1.200"/></svg>
<div class="abs" style="left:0;top:935px;width:1807px;height:60px;background:linear-gradient(rgba(40,40,40,0),rgba(40,40,40,.06) 35%,rgba(40,40,40,.2) 70%,rgba(40,40,40,.42));pointer-events:none"></div>

</body>
</html>
